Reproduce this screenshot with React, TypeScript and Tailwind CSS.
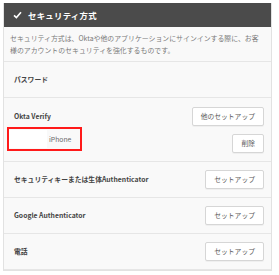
import React from "react";

const font = { fontFamily: '"Noto Sans CJK JP", "Noto Sans", sans-serif' };

function Btn({ children }: { children: React.ReactNode }) {
  return (
    <div className="h-[19px] px-[8px] flex items-center bg-white border border-[#d6d6d6] rounded-[2px] text-[6.8px] text-[#5a5a5a] shadow-[0_1px_0_rgba(0,0,0,0.04)]">
      {children}
    </div>
  );
}

function Row({ title, btn }: { title: string; btn: string }) {
  return (
    <div className="h-[36px] flex items-center justify-between pl-[10px] pr-[7px] border-b border-[#e6e6e6]">
      <span className="text-[6.8px] font-semibold text-[#444]">{title}</span>
      <Btn>{btn}</Btn>
    </div>
  );
}

export default function App() {
  return (
    <div className="w-[279px] h-[275px] bg-white pt-[3px] pl-[3px]" style={font}>
      <div className="w-[269px] border border-[#e2e2e2] border-t-0 bg-[#f9f9f9]">
        <div className="h-[24px] bg-[#4b4b4b] flex items-center pl-[9px] gap-[6px]">
          <svg width="9" height="8" viewBox="0 0 9 8">
            <path d="M1 4.3 L3.4 6.6 L8 1.2" stroke="#fff" strokeWidth="1.6" fill="none" />
          </svg>
          <span className="text-[8.4px] font-bold text-white tracking-[0.3px]">セキュリティ方式</span>
        </div>
        <div className="h-[35px] pt-[5px] px-[6px] text-[6.9px] leading-[12px] text-[#7a7a7a] border-b border-[#e6e6e6]">
          セキュリティ方式は、Oktaや他のアプリケーションにサインインする際に、お客様のアカウントのセキュリティを強化するものです。
        </div>
        <div className="h-[36px] flex items-center pl-[10px] border-b border-[#e6e6e6]">
          <span className="text-[6.8px] font-semibold text-[#444]">パスワード</span>
        </div>
        <div className="h-[64px] flex flex-col pl-[10px] pr-[7px] pt-[9px] border-b border-[#e6e6e6]">
          <div className="h-[19px] flex items-center justify-between">
            <span className="text-[6.8px] font-semibold text-[#444]">Okta Verify</span>
            <Btn>他のセットアップ</Btn>
          </div>
          <div className="flex items-start justify-between mt-[1px]">
            <div className="-ml-[7px] w-[75px] h-[24px] border-2 border-[#ff1a1a] flex items-center">
              <div className="w-[38px] h-[18px] bg-white" />
              <span className="ml-[2px] text-[6.8px] text-[#6a6a6a]">iPhone</span>
            </div>
            <div className="mt-[7px]">
              <Btn>削除</Btn>
            </div>
          </div>
        </div>
        <Row title="セキュリティキーまたは生体Authenticator" btn="セットアップ" />
        <Row title="Google Authenticator" btn="セットアップ" />
        <Row title="電話" btn="セットアップ" />
      </div>
    </div>
  );
}
